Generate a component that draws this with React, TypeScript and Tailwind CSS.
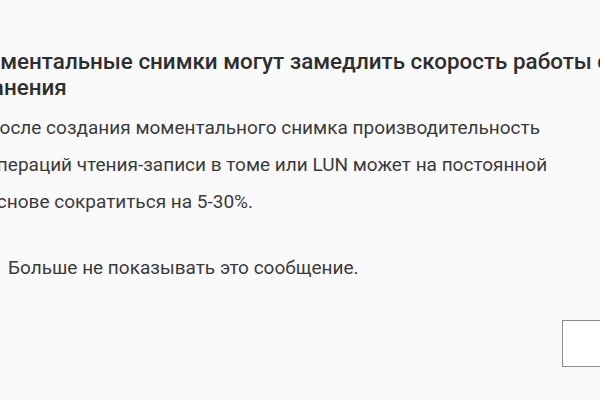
import * as React from "react"

export default function App() {
  return (
    <div className="w-[600px] h-[400px] overflow-hidden bg-[#fafafa] text-[#333333] font-['Roboto','Noto_Sans',sans-serif]">
      <div className="-ml-[14px] pt-[48px] flex flex-col">
        {/* Title */}
        <h2 className="-ml-[18px] w-[780px] text-[22.4px] leading-[26px] font-medium text-[#2e2e2e]">
          Моментальные снимки могут замедлить скорость работы системы хранения
        </h2>

        {/* Message */}
        <p className="mt-[9px] w-[600px] text-[19px] leading-[37px] text-[#3a3a3a]">
          После создания моментального снимка производительность операций чтения-записи в томе или LUN может на постоянной основе сократиться на 5-30%.
        </p>

        {/* Don't show again */}
        <label className="mt-[36px] flex items-center gap-[8px] text-[19px] leading-[24px] text-[#3a3a3a]">
          <input type="checkbox" className="w-[14px] h-[14px]" />
          Больше не показывать это сообщение.
        </label>

        {/* Footer */}
        <div className="mt-[40px] flex justify-end w-[690px]">
          <button className="w-[114px] h-[47px] bg-white border border-[#8c8c8c] text-[17px]">
            ОК
          </button>
        </div>
      </div>
    </div>
  )
}
